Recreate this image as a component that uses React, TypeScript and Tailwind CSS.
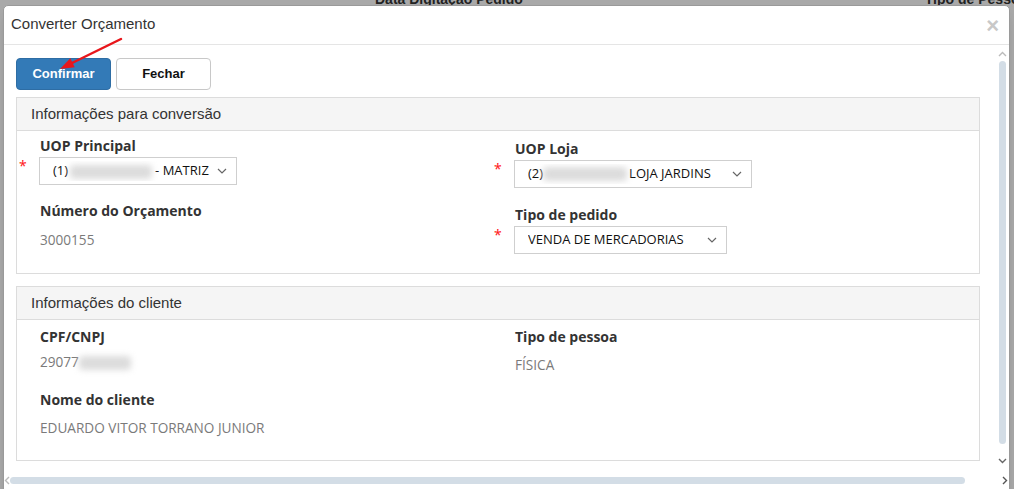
import React from 'react';

const sans = "font-['Liberation_Sans',Arial,sans-serif]";
const open = "font-['Open_Sans','Noto_Sans',sans-serif]";

function Blur({ w }: { w: string }) {
  return <span className={`inline-block ${w} h-[14px] align-middle bg-[#dcdcdc] blur-[3px] rounded`} />;
}

function Chevron() {
  return (
    <svg width="10" height="6" viewBox="0 0 10 6" className="shrink-0">
      <path d="M1 1l4 4 4-4" fill="none" stroke="#666" strokeWidth="1.2" />
    </svg>
  );
}

function Select({ width, children }: { width: string; children: React.ReactNode }) {
  return (
    <div className={`${width} h-[28px] border border-[#cfcfcf] bg-white flex items-center pl-[13px] pr-[9px] ${open} text-[13px] text-[#111]`}>
      <div className="flex-1 flex items-center whitespace-nowrap overflow-hidden">{children}</div>
      <Chevron />
    </div>
  );
}

function Required() {
  return <div className="w-[22px] pl-[2px] text-[#ff2020] text-[14px] leading-none pt-[2px]">*</div>;
}

function Label({ children, className = '' }: { children: React.ReactNode; className?: string }) {
  return <div className={`${open} font-bold text-[14px] leading-[20px] text-[#333] pl-[23px] ${className}`}>{children}</div>;
}

function Value({ children, className = '' }: { children: React.ReactNode; className?: string }) {
  return <div className={`${open} text-[13.6px] leading-[20px] text-[#7a7a7a] pl-[23px] ${className}`}>{children}</div>;
}

function Panel({ title, className, children }: { title: string; className: string; children: React.ReactNode }) {
  return (
    <div className={`border border-[#dcdcdc] bg-white ${className}`}>
      <div className={`h-[33px] bg-[#f5f5f5] border-b border-[#dcdcdc] pl-[14px] flex items-center ${sans} text-[15px] text-[#333]`}>
        {title}
      </div>
      {children}
    </div>
  );
}

export default function App() {
  return (
    <div className="relative w-[1014px] h-[489px] overflow-hidden bg-[#a9a9a9]">
      {/* pagina por tras do modal */}
      <div className={`h-[5px] overflow-hidden ${sans} font-bold text-[14px] text-[#222] whitespace-nowrap`}>
        <div className="flex -mt-[11px]">
          <span className="ml-[375px] shrink-0">Data Digitação Pedido</span>
          <span className="ml-[402px] shrink-0">Tipo de Pessoa</span>
        </div>
      </div>

      {/* modal */}
      <div className="absolute left-[3px] top-[5px] w-[1007px] h-[500px] bg-white rounded-[5px] border border-[#9a9a9a] shadow-lg flex flex-col">
        <div className="h-[39px] shrink-0 border-b border-[#e5e5e5] flex items-center justify-between pl-[7px] pr-[10px]">
          <span className={`${sans} text-[15px] text-[#333] -mt-[2px]`}>Converter Orçamento</span>
          <span className={`${sans} font-bold text-[22px] text-[#c8c8c8] leading-none mt-[2px]`}>×</span>
        </div>

        <div className="flex h-[426px]">
          <div className="w-[991px] pl-[12px] pt-[13px]">
            <div className="flex gap-[5px]">
              <button className={`w-[95px] h-[32px] rounded-[4px] bg-[#337ab7] border border-[#2e6da4] text-white ${sans} font-bold text-[13px]`}>
                Confirmar
              </button>
              <button className={`w-[95px] h-[32px] rounded-[4px] bg-white border border-[#c8c8c8] text-[#111] ${sans} font-bold text-[13px]`}>
                Fechar
              </button>
            </div>

            <Panel title="Informações para conversão" className="mt-[7px] w-[964px] h-[177px]">
              <div className="grid grid-cols-[475px_1fr]">
                <div className="pt-[5px]">
                  <Label>UOP Principal</Label>
                  <div className="flex mt-[1px]">
                    <Required />
                    <Select width="w-[198px]">
                      <span>(1)</span>
                      <span className="ml-[2px]"><Blur w="w-[82px]" /></span>
                      <span className="ml-[3px]">- MATRIZ</span>
                    </Select>
                  </div>
                  <Label className="mt-[16px]">Número do Orçamento</Label>
                  <Value className={`mt-[9px] ${sans}`}>3000155</Value>
                </div>
                <div className="pt-[8px]">
                  <Label>UOP Loja</Label>
                  <div className="flex mt-[1px]">
                    <Required />
                    <Select width="w-[238px]">
                      <span>(2)</span>
                      <Blur w="w-[84px]" />
                      <span className="ml-[2px]">LOJA JARDINS</span>
                    </Select>
                  </div>
                  <Label className="mt-[17px]">Tipo de pedido</Label>
                  <div className="flex mt-[1px]">
                    <Required />
                    <Select width="w-[213px]">VENDA DE MERCADORIAS</Select>
                  </div>
                </div>
              </div>
            </Panel>

            <Panel title="Informações do cliente" className="mt-[12px] w-[964px] h-[175px]">
              <div className="grid grid-cols-[475px_1fr]">
                <div className="pt-[7px]">
                  <Label>CPF/CNPJ</Label>
                  <Value className="mt-[5px]">
                    29077<Blur w="w-[52px]" />
                  </Value>
                  <Label className="mt-[18px]">Nome do cliente</Label>
                  <Value className="mt-[8px]">EDUARDO VITOR TORRANO JUNIOR</Value>
                </div>
                <div className="pt-[7px]">
                  <Label>Tipo de pessoa</Label>
                  <Value className="mt-[8px]">FÍSICA</Value>
                </div>
              </div>
            </Panel>
          </div>

          {/* barra de rolagem vertical */}
          <div className="w-[14px] flex flex-col items-center pt-[6px]">
            <svg width="9" height="6" viewBox="0 0 9 6">
              <path d="M1 5l3.5-3.5L8 5" fill="none" stroke="#bbb" strokeWidth="1.4" />
            </svg>
            <div className="mt-[4px] w-[7px] h-[383px] rounded-full bg-[#d3dde6]" />
            <svg width="9" height="6" viewBox="0 0 9 6" className="mt-[14px]">
              <path d="M1 1l3.5 3.5L8 1" fill="none" stroke="#666" strokeWidth="1.4" />
            </svg>
          </div>
        </div>

        {/* barra de rolagem horizontal */}
        <div className="flex items-center h-[14px] mt-[2px]">
          <svg width="6" height="9" viewBox="0 0 6 9">
            <path d="M5 1L1.5 4.5 5 8" fill="none" stroke="#bbb" strokeWidth="1.4" />
          </svg>
          <div className="w-[955px] h-[7px] rounded-full bg-[#d3dde6]" />
          <svg width="6" height="9" viewBox="0 0 6 9" className="ml-[37px]">
            <path d="M1 1l3.5 3.5L1 8" fill="none" stroke="#555" strokeWidth="1.4" />
          </svg>
        </div>
      </div>

      {/* seta vermelha de destaque */}
      <svg className="absolute left-0 top-0 pointer-events-none" width="140" height="90" viewBox="0 0 140 90">
        <line x1="121" y1="39" x2="70" y2="64" stroke="#e8161b" strokeWidth="2.5" strokeLinecap="round" />
        <path d="M60 69 L70.3 58.2 L74.7 67.2 Z" fill="#e8161b" />
      </svg>
    </div>
  );
}
